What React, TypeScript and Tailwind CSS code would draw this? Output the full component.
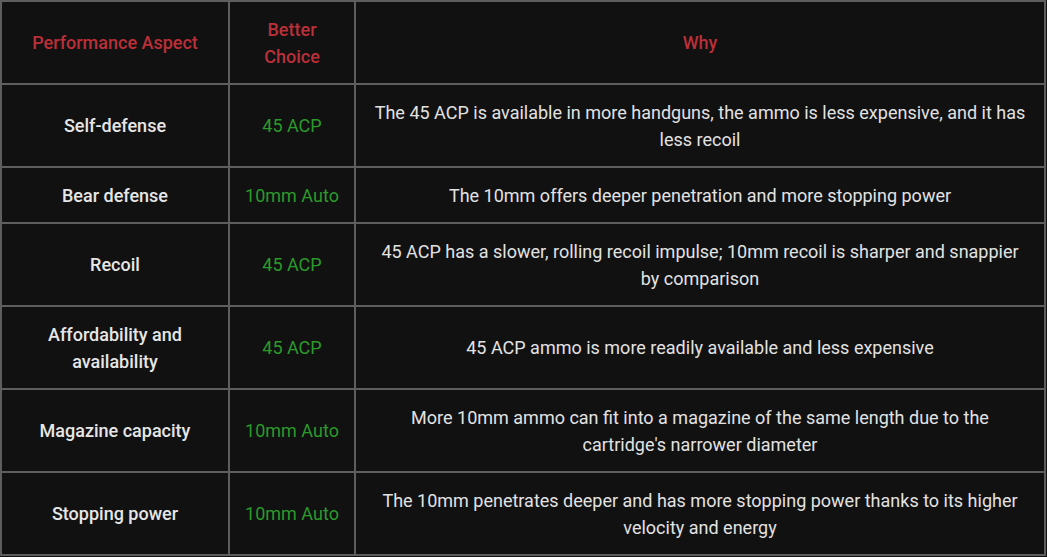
import React from 'react';

const rows = [
  {
    aspect: 'Self-defense',
    choice: '45 ACP',
    why: 'The 45 ACP is available in more handguns, the ammo is less expensive, and it has less recoil',
  },
  {
    aspect: 'Bear defense',
    choice: '10mm Auto',
    why: 'The 10mm offers deeper penetration and more stopping power',
  },
  {
    aspect: 'Recoil',
    choice: '45 ACP',
    why: '45 ACP has a slower, rolling recoil impulse; 10mm recoil is sharper and snappier by comparison',
  },
  {
    aspect: 'Affordability and availability',
    choice: '45 ACP',
    why: '45 ACP ammo is more readily available and less expensive',
  },
  {
    aspect: 'Magazine capacity',
    choice: '10mm Auto',
    why: "More 10mm ammo can fit into a magazine of the same length due to the cartridge's narrower diameter",
  },
  {
    aspect: 'Stopping power',
    choice: '10mm Auto',
    why: 'The 10mm penetrates deeper and has more stopping power thanks to its higher velocity and energy',
  },
];

export default function App() {
  return (
    <div className="min-h-screen bg-[#111111] font-['Roboto',sans-serif] text-[18px] leading-[27px]">
      <table className="w-[1046px] table-fixed border-collapse border-2 border-[#5e5e5e] text-center">
        <colgroup>
          <col className="w-[228px]" />
          <col className="w-[126px]" />
          <col />
        </colgroup>
        <thead>
          <tr className="text-[#bb2f38]">
            <th className="border-2 border-[#5e5e5e] px-[16px] py-[13.5px] font-medium">Performance Aspect</th>
            <th className="border-2 border-[#5e5e5e] px-[16px] py-[13.5px] font-medium">Better Choice</th>
            <th className="border-2 border-[#5e5e5e] px-[16px] py-[13.5px] font-medium">Why</th>
          </tr>
        </thead>
        <tbody>
          {rows.map((r) => (
            <tr key={r.aspect}>
              <td className="border-2 border-[#5e5e5e] px-[16px] py-[13.5px] font-medium text-[#e6e6e6]">
                {r.aspect}
              </td>
              <td className="whitespace-nowrap border-2 border-[#5e5e5e] px-[4px] py-[13.5px] text-[#2b9a2b]">
                {r.choice}
              </td>
              <td className="border-2 border-[#5e5e5e] px-[16px] py-[13.5px] text-[#e2e2e2]">{r.why}</td>
            </tr>
          ))}
        </tbody>
      </table>
    </div>
  );
}
